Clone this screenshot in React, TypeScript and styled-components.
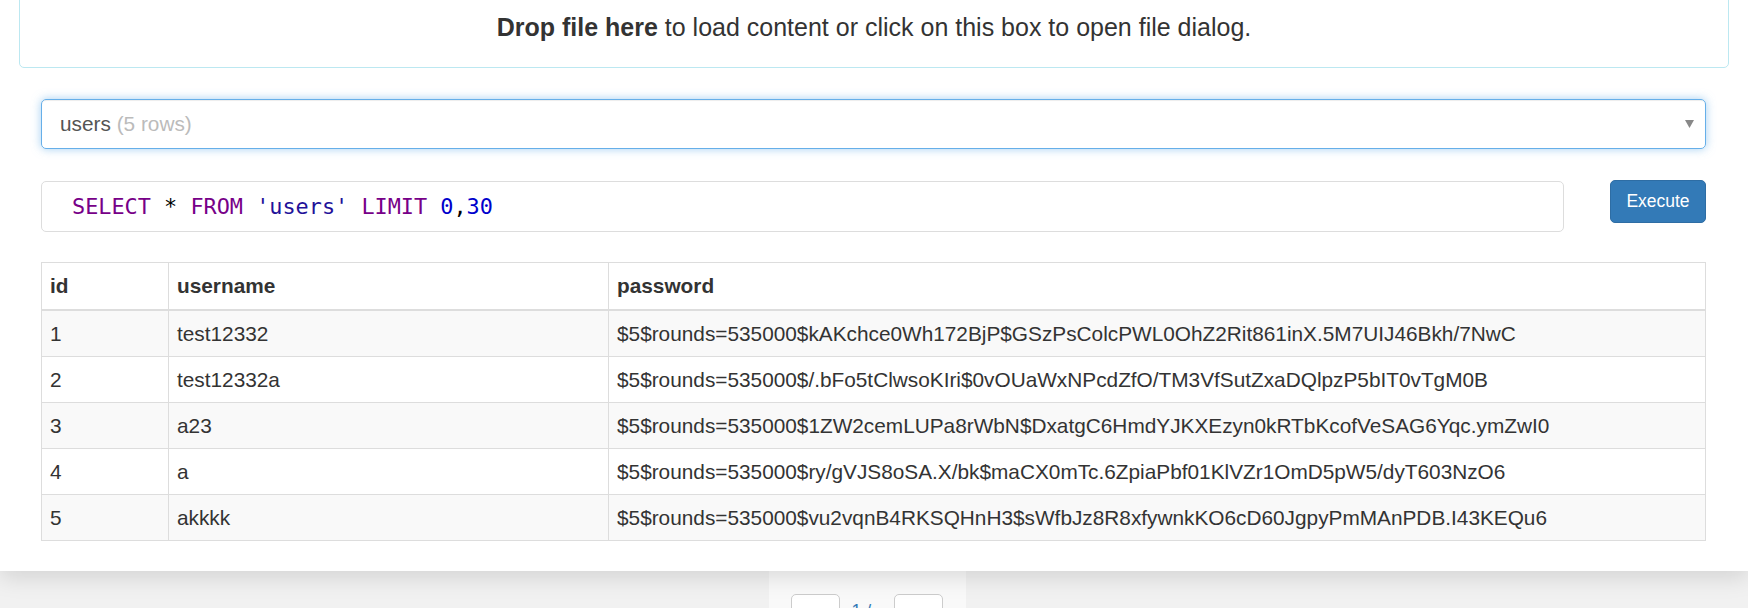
import React from 'react'
import styled, { createGlobalStyle } from 'styled-components';

const GlobalStyle = createGlobalStyle`
	html, body {
		margin: 0;
		padding: 0;
		background: #f1f1f1;
	}
	body {
		font-family: 'Liberation Sans', Arial, sans-serif;
		font-size: 17.5px;
		line-height: 25px;
		color: #333;
		overflow: hidden;
	}
`;

const Panel = styled.div`
	position: relative;
	z-index: 1;
	background: #fff;
	padding: 0 19px 30px;
	box-shadow: 0 6px 22px rgba(0, 0, 0, 0.13);
`;

const DropZone = styled.div`
	margin-top: -12px;
	padding: 21px 10px;
	border: 1px solid #bce8f1;
	border-radius: 5px;
	background: #fff;
	text-align: center;
	font-size: 25px;
	line-height: 35.7px;
	cursor: pointer;

	b {
		font-weight: bold;
	}
`;

const Content = styled.div`
	padding: 31px 23px 0 22px;
`;

const TableSelect = styled.div`
	display: flex;
	align-items: center;
	box-sizing: border-box;
	height: 50px;
	padding: 0 11px 0 18px;
	border: 1px solid #66afe9;
	border-radius: 5px;
	box-shadow: inset 0 1px 1px rgba(0, 0, 0, 0.075), 0 0 10px rgba(102, 175, 233, 0.6);
	font-size: 20.8px;
	color: #555;
`;

const SelectLabel = styled.span`
	flex: 1;
`;

const RowCount = styled.span`
	color: #bbb;
`;

const QueryRow = styled.div`
	display: flex;
	align-items: flex-start;
	margin-top: 31px;
`;

const QueryBox = styled.div`
	flex: 1;
	box-sizing: border-box;
	height: 51px;
	margin-top: 1px;
	display: flex;
	align-items: center;
	padding-left: 30px;
	border: 1px solid #ddd;
	border-radius: 5px;
`;

const Code = styled.code`
	font-family: 'DejaVu Sans Mono', 'Liberation Mono', monospace;
	font-size: 21.85px;
	color: #000;
	white-space: pre;
`;

const Token = styled.span<{ $kind: 'keyword' | 'string' | 'number' }>`
	color: ${p => p.$kind === 'keyword' ? '#770088' : p.$kind === 'string' ? '#221199' : '#0000cc'};
`;

const ExecuteButton = styled.button`
	box-sizing: border-box;
	width: 96px;
	height: 43px;
	margin-left: 46px;
	padding: 0;
	border: 1px solid #2e6da4;
	border-radius: 5px;
	background: #337ab7;
	color: #fff;
	font-family: inherit;
	font-size: 17.5px;
	cursor: pointer;
`;

const ResultTable = styled.table`
	width: 100%;
	margin-top: 30px;
	border-collapse: collapse;
	table-layout: fixed;
	font-size: 20.8px;

	th, td {
		padding: 8px;
		border: 1px solid #ddd;
		text-align: left;
		white-space: nowrap;
		line-height: 29px;
	}

	th {
		padding-bottom: 9px;
		border-bottom: 2px solid #ddd;
		font-weight: bold;
	}

	tbody tr:nth-child(odd) td {
		background: #f9f9f9;
	}
`;

const PagerBar = styled.div`
	display: flex;
	justify-content: center;
	padding-right: 13px;
`;

const Pager = styled.div`
	display: flex;
	align-items: flex-start;
	width: 197px;
	box-sizing: border-box;
	height: 60px;
	padding: 23px 23px 0 22px;
	background: #f9f9f9;
`;

const PageButton = styled.button`
	box-sizing: border-box;
	width: 49px;
	height: 43px;
	padding: 0;
	border: 1px solid #ccc;
	border-radius: 5px;
	background: #fff;
	color: #333;
	font-family: inherit;
	font-size: 24px;
	line-height: 30px;
`;

const PageInfo = styled.span`
	margin: 5px 9px 0 12px;
	color: #337ab7;
`;

const rows = [
	{ id: 1, username: 'test12332', password: '$5$rounds=535000$kAKchce0Wh172BjP$GSzPsColcPWL0OhZ2Rit861inX.5M7UIJ46Bkh/7NwC' },
	{ id: 2, username: 'test12332a', password: '$5$rounds=535000$/.bFo5tClwsoKIri$0vOUaWxNPcdZfO/TM3VfSutZxaDQlpzP5bIT0vTgM0B' },
	{ id: 3, username: 'a23', password: '$5$rounds=535000$1ZW2cemLUPa8rWbN$DxatgC6HmdYJKXEzyn0kRTbKcofVeSAG6Yqc.ymZwI0' },
	{ id: 4, username: 'a', password: '$5$rounds=535000$ry/gVJS8oSA.X/bk$maCX0mTc.6ZpiaPbf01KlVZr1OmD5pW5/dyT603NzO6' },
	{ id: 5, username: 'akkkk', password: '$5$rounds=535000$vu2vqnB4RKSQHnH3$sWfbJz8R8xfywnkKO6cD60JgpyPmMAnPDB.I43KEQu6' },
];

const Caret = () => (
	<svg width="9" height="8" viewBox="0 0 9 8">
		<polygon points="0,0 9,0 4.5,8" fill="#888" />
	</svg>
);

export default function App() {
	return (
		<>
			<GlobalStyle />
			<Panel>
				<DropZone>
					<b>Drop file here</b> to load content or click on this box to open file dialog.
				</DropZone>
				<Content>
					<TableSelect>
						<SelectLabel>users <RowCount>(5 rows)</RowCount></SelectLabel>
						<Caret />
					</TableSelect>
					<QueryRow>
						<QueryBox>
							<Code>
								<Token $kind="keyword">SELECT</Token>{' * '}<Token $kind="keyword">FROM</Token>{' '}<Token $kind="string">'users'</Token>{' '}<Token $kind="keyword">LIMIT</Token>{' '}<Token $kind="number">0</Token>,<Token $kind="number">30</Token>
							</Code>
						</QueryBox>
						<ExecuteButton>Execute</ExecuteButton>
					</QueryRow>
					<ResultTable>
						<colgroup>
							<col style={{ width: 127 }} />
							<col style={{ width: 440 }} />
							<col />
						</colgroup>
						<thead>
							<tr>
								<th>id</th>
								<th>username</th>
								<th>password</th>
							</tr>
						</thead>
						<tbody>
							{rows.map(row => (
								<tr key={row.id}>
									<td>{row.id}</td>
									<td>{row.username}</td>
									<td>{row.password}</td>
								</tr>
							))}
						</tbody>
					</ResultTable>
				</Content>
			</Panel>
			<PagerBar>
				<Pager>
					<PageButton>‹</PageButton>
					<PageInfo>1 / 1</PageInfo>
					<PageButton>›</PageButton>
				</Pager>
			</PagerBar>
		</>
	);
}
